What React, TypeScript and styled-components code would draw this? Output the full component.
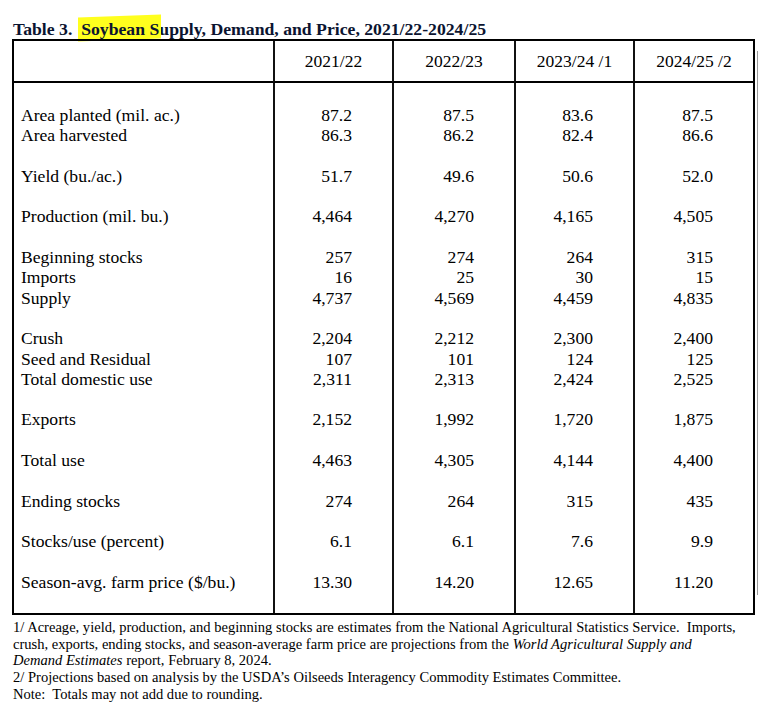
import React from "react";
import styled, { createGlobalStyle } from "styled-components";

const Global = createGlobalStyle`
  html, body { margin: 0; padding: 0; background: #ffffff; }
  body { font-family: "Liberation Serif", "Times New Roman", serif; color: #000; }
`;

const Page = styled.div`
  padding: 19px 0 0 12px;
  width: 764px;
  box-sizing: border-box;
`;

const Title = styled.div`
  font-weight: bold;
  font-size: 17.7px;
  line-height: 20px;
  height: 20px;
  padding-left: 1px;
  color: #0b1430;
  white-space: pre;
`;

const Mark = styled.span`
  position: relative;
  z-index: 0;
  &::before {
    content: "";
    position: absolute;
    left: -3px;
    right: -2px;
    top: -3px;
    bottom: -1px;
    background: #ffff1e;
    transform: skewY(-2deg);
    z-index: -1;
  }
`;

const TableFrame = styled.div`
  position: relative;
  width: 743px;
  box-sizing: border-box;
  border: 2px solid #000;
  display: grid;
  grid-template-columns: 259px 119px 122px 119px 120px;
  &::after {
    content: "";
    position: absolute;
    right: -5px;
    top: 10px;
    bottom: 18px;
    width: 1px;
    background: #9a9a9a;
  }
`;

const HeadCell = styled.div<{ $first?: boolean }>`
  height: 42px;
  box-sizing: border-box;
  border-bottom: 2px solid #000;
  border-left: ${(p) => (p.$first ? "none" : "2px solid #111")};
  display: flex;
  align-items: center;
  justify-content: center;
  font-size: 17.5px;
  padding-top: 1px;
  white-space: pre;
`;

const BodyCell = styled.div<{ $label?: boolean }>`
  box-sizing: border-box;
  border-left: ${(p) => (p.$label ? "none" : "2px solid #111")};
  padding: 22px ${(p) => (p.$label ? "0" : "40px")} 21px ${(p) => (p.$label ? "7px" : "0")};
  display: flex;
  flex-direction: column;
  gap: 20.3px;
  text-align: ${(p) => (p.$label ? "left" : "right")};
  font-size: 17.6px;
`;

const Group = styled.div`
  display: flex;
  flex-direction: column;
`;

const Line = styled.div`
  line-height: 20.3px;
  height: 20.3px;
  white-space: nowrap;
`;

const Notes = styled.div`
  margin-top: 4px;
  padding-left: 1px;
  font-size: 14.55px;
  line-height: 16.6px;
`;

const NoteLine = styled.div`
  white-space: pre;
`;

type Row = [string, string, string, string, string];

const groups: Row[][] = [
  [
    ["Area planted (mil. ac.)", "87.2", "87.5", "83.6", "87.5"],
    ["Area harvested", "86.3", "86.2", "82.4", "86.6"],
  ],
  [["Yield (bu./ac.)", "51.7", "49.6", "50.6", "52.0"]],
  [["Production (mil. bu.)", "4,464", "4,270", "4,165", "4,505"]],
  [
    ["Beginning stocks", "257", "274", "264", "315"],
    ["Imports", "16", "25", "30", "15"],
    ["Supply", "4,737", "4,569", "4,459", "4,835"],
  ],
  [
    ["Crush", "2,204", "2,212", "2,300", "2,400"],
    ["Seed and Residual", "107", "101", "124", "125"],
    ["Total domestic use", "2,311", "2,313", "2,424", "2,525"],
  ],
  [["Exports", "2,152", "1,992", "1,720", "1,875"]],
  [["Total use", "4,463", "4,305", "4,144", "4,400"]],
  [["Ending stocks", "274", "264", "315", "435"]],
  [["Stocks/use (percent)", "6.1", "6.1", "7.6", "9.9"]],
  [["Season-avg. farm price ($/bu.)", "13.30", "14.20", "12.65", "11.20"]],
];

const headers = ["", "2021/22", "2022/23", "2023/24 /1", "2024/25 /2"];

export default function App() {
  return (
    <Page>
      <Global />
      <Title>
        {"Table 3.  "}
        <Mark>Soybean S</Mark>
        {"upply, Demand, and Price, 2021/22-2024/25"}
      </Title>
      <TableFrame>
        {headers.map((h, i) => (
          <HeadCell key={i} $first={i === 0}>
            {h}
          </HeadCell>
        ))}
        {[0, 1, 2, 3, 4].map((col) => (
          <BodyCell key={col} $label={col === 0}>
            {groups.map((g, gi) => (
              <Group key={gi}>
                {g.map((r, ri) => (
                  <Line key={ri}>{r[col]}</Line>
                ))}
              </Group>
            ))}
          </BodyCell>
        ))}
      </TableFrame>
      <Notes>
        <NoteLine>
          {"1/ Acreage, yield, production, and beginning stocks are estimates from the National Agricultural Statistics Service.  Imports,"}
        </NoteLine>
        <NoteLine>
          {"crush, exports, ending stocks, and season-average farm price are projections from the "}
          <i>World Agricultural Supply and</i>
        </NoteLine>
        <NoteLine>
          <i>Demand Estimates</i>
          {" report, February 8, 2024."}
        </NoteLine>
        <NoteLine>{"2/ Projections based on analysis by the USDA’s Oilseeds Interagency Commodity Estimates Committee."}</NoteLine>
        <NoteLine>{"Note:  Totals may not add due to rounding."}</NoteLine>
      </Notes>
    </Page>
  );
}
